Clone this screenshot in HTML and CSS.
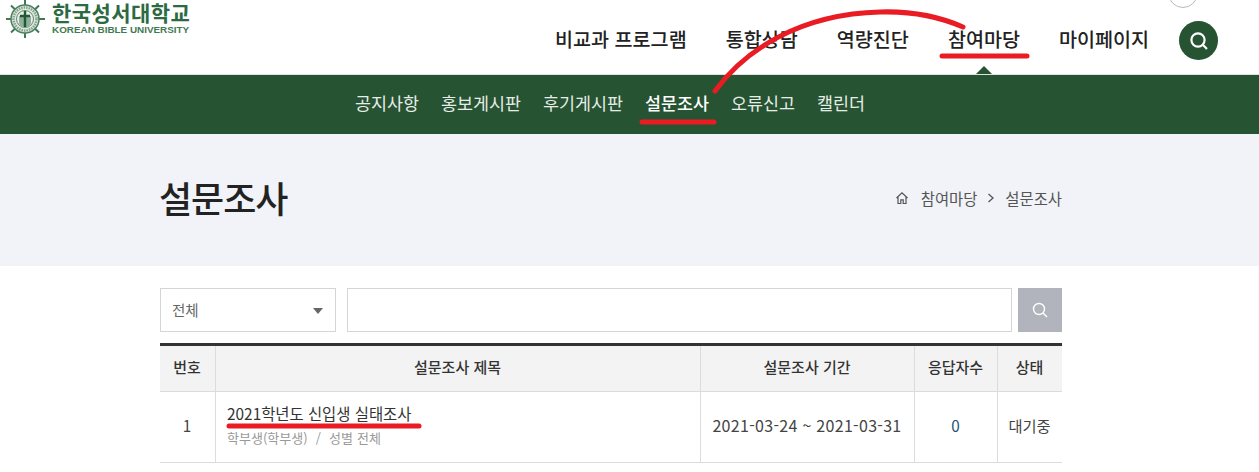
FILE: index.html
```html
<!DOCTYPE html>
<html lang="ko">
<head>
<meta charset="utf-8">
<title>설문조사</title>
<link rel="stylesheet" href="styles.css">
</head>
<body>
<header class="top">
  <a class="logo">
    <svg class="seal" width="42" height="39" viewBox="0 0 42 39">
      <g stroke="#3f7a52" stroke-width="2" fill="none">
        <path d="M20 0V38M1 19H40M6 5.500L34 32.500M34 5.500L6 32.500"/>
      </g>
      <circle cx="20" cy="19" r="14" fill="#dfe7df" stroke="#4b8060" stroke-width="1.500"/>
      <circle cx="20" cy="19" r="11.500" fill="none" stroke="#7fa38c" stroke-width="2.500" stroke-dasharray="1.500 1"/>
      <circle cx="20" cy="19" r="8.500" fill="#e9eee9" stroke="#5e8c6d"/>
      <path d="M14 16H26V22Q26 26 20 27.500Q14 26 14 22Z" fill="#8fae9b"/>
      <path d="M20 11V27M15 16H25" stroke="#1f5a35" stroke-width="2.400"/>
    </svg>
    <span class="logo-text">
      <span class="logo-ko">한국성서대학교</span>
      <span class="logo-en">KOREAN BIBLE UNIVERSITY</span>
    </span>
  </a>
  <span class="top-ring"></span>
  <nav class="gnb">
    <a>비교과 프로그램</a>
    <a>통합상담</a>
    <a>역량진단</a>
    <a class="current">참여마당</a>
    <a>마이페이지</a>
  </nav>
  <button class="round-search" aria-label="검색">
    <svg width="20" height="20" viewBox="0 0 20 20" fill="none" stroke="#fff" stroke-width="2.2"><circle cx="9" cy="9" r="6.6"/><path d="M13.8 13.8L18 18"/></svg>
  </button>
</header>
<nav class="lnb">
  <a>공지사항</a>
  <a>홍보게시판</a>
  <a>후기게시판</a>
  <a class="on">설문조사</a>
  <a>오류신고</a>
  <a>캘린더</a>
</nav>
<section class="band">
  <div class="wrap band-in">
    <h1>설문조사</h1>
    <div class="crumb">
      <svg class="home" width="14" height="14" viewBox="0 0 14 14" fill="none" stroke="#555" stroke-width="1.2"><path d="M1.500 7L7 1.800L12.500 7M3 6V12.500H5.800V8.800H8.200V12.500H11V6"/></svg>
      <span>참여마당</span>
      <svg width="8" height="10" viewBox="0 0 8 10" fill="none" stroke="#555" stroke-width="1.300"><path d="M1.500 1L6 5L1.500 9"/></svg>
      <span>설문조사</span>
    </div>
  </div>
</section>
<main class="wrap">
  <form class="search">
    <div class="sel"><span>전체</span><i class="caret"></i></div>
    <div class="inp"></div>
    <button class="go" type="button" aria-label="검색">
      <svg width="16" height="16" viewBox="0 0 16 16" fill="none" stroke="#fff" stroke-width="1.400"><circle cx="7" cy="7" r="5.500"/><path d="M11 11L15 15"/></svg>
    </button>
  </form>
  <table class="list">
    <colgroup><col class="c1"><col class="c2"><col class="c3"><col class="c4"><col class="c5"></colgroup>
    <thead>
      <tr><th>번호</th><th>설문조사 제목</th><th>설문조사 기간</th><th>응답자수</th><th>상태</th></tr>
    </thead>
    <tbody>
      <tr>
        <td>1</td>
        <td class="title"><a>2021학년도 신입생 실태조사</a><p>학부생(학부생) <b>/</b> 성별 전체</p></td>
        <td class="date">2021-03-24 ~ 2021-03-31</td>
        <td class="num">0</td>
        <td>대기중</td>
      </tr>
    </tbody>
  </table>
</main>
<svg class="marks" width="1259" height="472" viewBox="0 0 1259 472" fill="none" stroke="#e91c24" stroke-linecap="round">
  <path d="M715 91C745 50 800 14 880 12C910 11 940 17 963 27" stroke-width="5"/>
  <path d="M942 56H1027" stroke-width="5"/>
  <path d="M642 122H714" stroke-width="5"/>
  <path d="M229 426H419" stroke-width="5"/>
</svg>
</body>
</html>
```

FILE: styles.css
```css
* { box-sizing: border-box; }
html, body { margin: 0; padding: 0; }
body {
  width: 1259px;
  height: 472px;
  overflow: hidden;
  position: relative;
  background: #fff;
  color: #222;
  font-family: "Noto Sans CJK KR", "Noto Sans", sans-serif;
}
.top {
  height: 75px;
  display: flex;
  align-items: flex-start;
  position: relative;
  border-bottom: 1px solid #e2e2e2;
}
.logo { display: flex; align-items: flex-start; gap: 5px; padding-left: 5px; width: 541px; }
.seal { flex: none; }
.logo-text { display: flex; flex-direction: column; color: #2c6a42; padding-top: 1px; }
.logo-ko { font-size: 21px; line-height: 23px; font-weight: 700; letter-spacing: .45px; }
.logo-en { font-size: 9.9px; line-height: 11px; font-weight: 700; font-family: "Liberation Sans", sans-serif; color: #3f7a52; }
.top-ring {
  position: absolute;
  left: 1168px;
  top: -22px;
  width: 30px;
  height: 30px;
  border: 1px solid #bbb;
  border-radius: 50%;
}
.gnb { display: flex; gap: 39px; padding: 24px 0 0 14px; font-size: 19.6px; line-height: 30px; font-weight: 500; color: #222; }
.gnb a { position: relative; white-space: nowrap; }
.current::after {
  content: "";
  position: absolute;
  left: 50%;
  bottom: -20px;
  margin-left: -8px;
  border: 8px solid transparent;
  border-top: 0;
  border-bottom-color: #265332;
}
.round-search {
  position: absolute;
  left: 1179px;
  top: 21px;
  width: 39px;
  height: 39px;
  padding: 0;
  border: 0;
  border-radius: 50%;
  background: #265332;
  display: flex;
  align-items: center;
  justify-content: center;
}
.lnb {
  height: 59px;
  background: #265332;
  color: #e6ece8;
  display: flex;
  align-items: center;
  justify-content: center;
  gap: 22px;
  font-size: 17.4px;
  padding: 0 39px 4px 0;
}
.lnb .on { color: #fff; font-weight: 500; }
.band { height: 132px; background: #f1f3f8; }
.wrap { width: 902px; margin-left: 160px; }
.band-in { display: flex; justify-content: space-between; align-items: center; height: 130px; }
h1 { margin: 0 0 4px -1px; font-size: 36px; font-weight: 500; color: #222; letter-spacing: -1px; }
.crumb { display: flex; align-items: center; gap: 10px; font-size: 15.4px; color: #555; padding-bottom: 2px; }
.home { margin-right: 2px; }
.search { display: flex; margin-top: 22px; height: 44px; }
.sel {
  width: 176px;
  border: 1px solid #d5d5d5;
  display: flex;
  align-items: center;
  justify-content: space-between;
  padding: 0 12px 2px 11px;
  font-size: 14.5px;
  color: #666;
}
.caret { width: 0; height: 0; border: 5px solid transparent; border-bottom: 0; border-top: 6px solid #666; margin-top: 3px; }
.inp { width: 665px; margin-left: 11px; border: 1px solid #d5d5d5; }
.go {
  width: 44px;
  margin-left: 6px;
  padding: 0;
  border: 0;
  background: #b2b4bd;
  display: flex;
  align-items: center;
  justify-content: center;
}
.list {
  width: 902px;
  margin-top: 11px;
  border-collapse: separate;
  border-spacing: 0;
  table-layout: fixed;
  border-top: 3px solid #333;
}
.c1 { width: 55px; }
.c2 { width: 485px; }
.c3 { width: 214px; }
.c4 { width: 83px; }
.c5 { width: 65px; }
th, td { text-align: center; border-bottom: 1px solid #dcdcdc; border-left: 1px solid #dcdcdc; }
th:first-child, td:first-child { border-left: 0; }
th {
  height: 46px;
  padding: 0 1px 4px 0;
  background: #f3f3f3;
  font-size: 15px;
  font-weight: 500;
  color: #333;
}
td { height: 71px; padding: 0 1px 5px 0; font-size: 15.3px; color: #444; }
.date { font-size: 16px; letter-spacing: .3px; }
.num { color: #24527a; }
td.title { text-align: left; padding: 3px 0 0 11px; }
.title a { display: block; font-size: 15.4px; line-height: 20px; color: #333; margin-top: -7px; }
.title p { margin: 6px 0 0; font-size: 13px; line-height: 18px; color: #999; word-spacing: .5px; }
.title b { font-weight: 400; margin: 0 4px; }
.marks { position: absolute; left: 0; top: 0; pointer-events: none; }
```
